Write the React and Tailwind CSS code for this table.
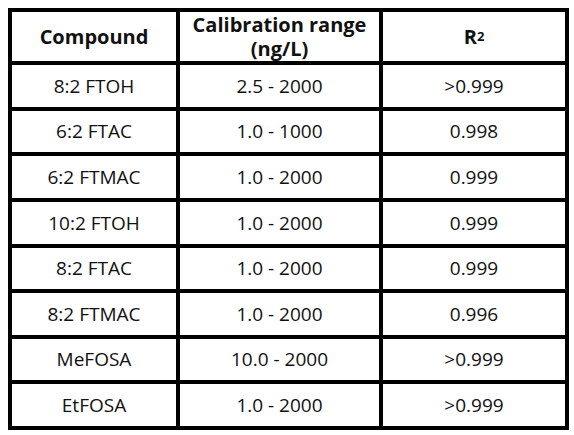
const rows = [
  ["8:2 FTOH", "2.5 - 2000", ">0.999", "h-[46px]"],
  ["6:2 FTAC", "1.0 - 1000", "0.998", "h-[45px]"],
  ["6:2 FTMAC", "1.0 - 2000", "0.999", "h-[46px]"],
  ["10:2 FTOH", "1.0 - 2000", "0.999", "h-[46px]"],
  ["8:2 FTAC", "1.0 - 2000", "0.999", "h-[45px]"],
  ["8:2 FTMAC", "1.0 - 2000", "0.996", "h-[46px]"],
  ["MeFOSA", "10.0 - 2000", ">0.999", "h-[45px]"],
  ["EtFOSA", "1.0 - 2000", ">0.999", "h-[46px]"],
];

const App = () => {
  return (
    <div className="w-[574px] h-[435px] bg-white pt-[8px] pl-[8px] text-[#111] font-['Open_Sans',sans-serif] text-[19px]">
      <div className="w-fit border-4 border-black">
        {/* header */}
        <div className="flex h-[49px] font-bold text-[20px] leading-[24px]">
          <div className="w-[164px] flex items-center justify-center">Compound</div>
          <div className="w-[203px] border-l-4 border-black flex flex-col items-center justify-center text-center">
            <span>Calibration range</span>
            <span>(ng/L)</span>
          </div>
          <div className="w-[186px] border-l-4 border-black flex items-center justify-center">
            R<sup className="text-[13px] relative -top-[1px]">2</sup>
          </div>
        </div>
        {rows.map(([name, range, r2, h]) => (
          <div key={name} className={`flex border-t-4 border-black ${h}`}>
            <div className="w-[164px] flex items-center justify-center">{name}</div>
            <div className="w-[203px] border-l-4 border-black flex items-center justify-center">{range}</div>
            <div className="w-[186px] border-l-4 border-black flex items-center justify-center">{r2}</div>
          </div>
        ))}
      </div>
    </div>
  );
};

export default App;
